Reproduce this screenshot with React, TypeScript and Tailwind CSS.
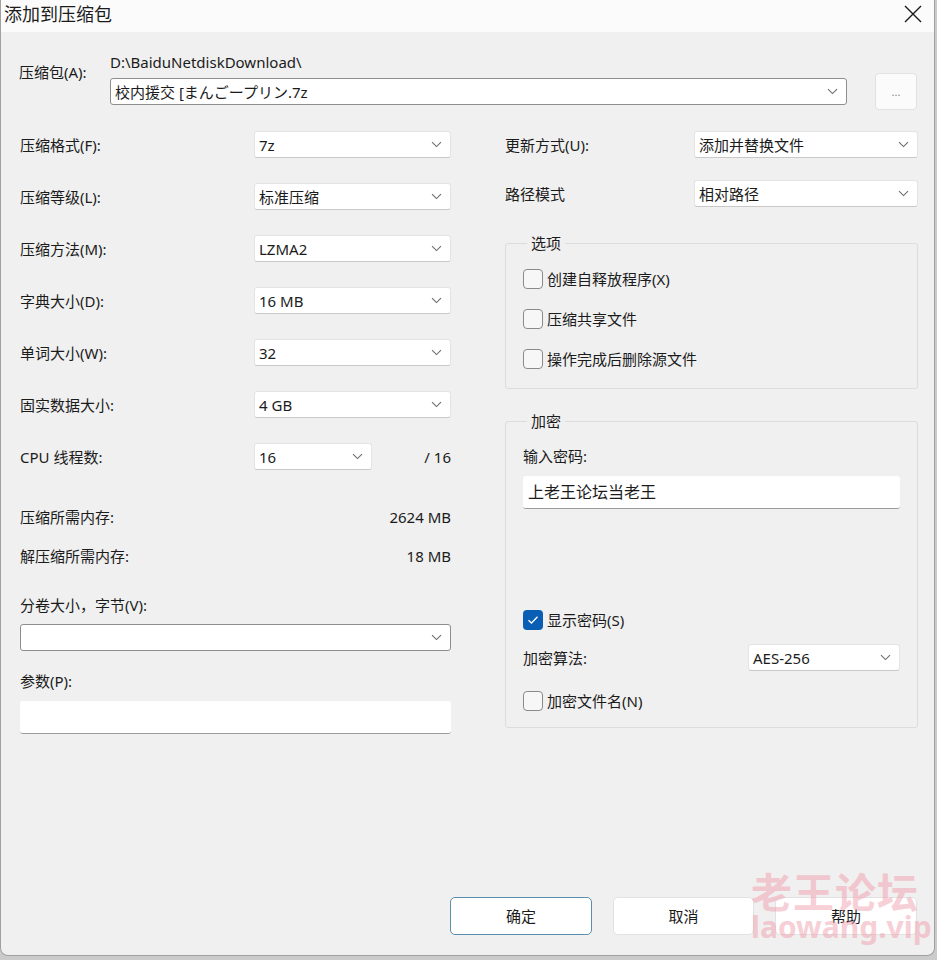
import React from "react";

const F = "font-['Noto_Sans','Noto_Sans_CJK_SC','Noto_Sans_CJK_JP',sans-serif]";

function Chevron() {
  return (
    <svg width="11" height="7" viewBox="0 0 11 7" className="shrink-0">
      <path d="M1 1.2 L5.5 5.6 L10 1.2" fill="none" stroke="#6b6b6b" strokeWidth="1.1" />
    </svg>
  );
}

function Select({ value, w, h = "h-[27px]", strong = false }: { value: string; w: string; h?: string; strong?: boolean }) {
  return (
    <div
      className={`${w} ${h} flex items-center justify-between bg-white rounded-[3px] pl-[4px] pr-[8px] ${
        strong ? "border border-[#8e8e8e]" : "border border-[#e4e4e4] border-b-[#c9c9c9]"
      }`}
    >
      <span className="text-[15px] leading-[20px] text-[#1b1b1b] whitespace-nowrap">{value}</span>
      <Chevron />
    </div>
  );
}

function Check({ label, checked = false }: { label: string; checked?: boolean }) {
  return (
    <div className="flex items-center h-[20px]">
      {checked ? (
        <div className="w-[20px] h-[20px] rounded-[4px] bg-[#0a5fb4] flex items-center justify-center">
          <svg width="12" height="10" viewBox="0 0 12 10">
            <path d="M1.5 5.2 L4.5 8 L10.5 1.8" fill="none" stroke="white" strokeWidth="1.3" />
          </svg>
        </div>
      ) : (
        <div className="w-[20px] h-[20px] rounded-[4px] border border-[#8a8a8a] bg-[#f7f7f7]" />
      )}
      <span className="ml-[4px] text-[15px] leading-[20px] text-[#1b1b1b] whitespace-nowrap">{label}</span>
    </div>
  );
}

function Row({ label, children }: { label: string; children: React.ReactNode }) {
  return (
    <div className="flex items-center justify-between h-[27px]">
      <span className="text-[15px] leading-[20px] text-[#1b1b1b] whitespace-nowrap">{label}</span>
      {children}
    </div>
  );
}

export default function App() {
  return (
    <div className={`w-[937px] h-[960px] bg-[#cbcbcb] ${F} overflow-hidden`}>
      <div className="relative w-[935px] h-[956px] bg-[#f0f0f0] border-l border-r border-b border-[#a0a0a0] rounded-b-[8px] flex flex-col">
        {/* title bar */}
        <div className="h-[32px] bg-[#fbfbfb] flex items-center justify-between pl-[3px] pr-[12px] shrink-0">
          <span className="text-[18px] leading-[24px] text-[#1b1b1b] -mt-[4px]">添加到压缩包</span>
          <svg width="18" height="18" viewBox="0 0 18 18" className="-mt-[4px]">
            <path d="M1 1 L17 17 M17 1 L1 17" stroke="#1b1b1b" strokeWidth="1.4" />
          </svg>
        </div>

        {/* archive row */}
        <div className="flex items-start pl-[18px] pt-[20px]">
          <span className="w-[91px] mt-[10px] text-[15px] leading-[20px] text-[#1b1b1b] whitespace-nowrap">压缩包(A):</span>
          <div className="flex flex-col">
            <span className="text-[15px] leading-[20px] text-[#1b1b1b]">D:\BaiduNetdiskDownload\</span>
            <div className="flex items-center mt-[1px] h-[37px]">
              <Select value="校内援交 [まんごープリン.7z" w="w-[737px]" h="h-[27px]" strong />
              <div className="ml-[28px] w-[42px] h-[37px] bg-[#fbfbfb] border border-[#e2e2e2] rounded-[4px] flex items-center justify-center">
                <span className="text-[11px] text-[#8a8a8a] leading-none">...</span>
              </div>
            </div>
          </div>
        </div>

        {/* main columns */}
        <div className="flex pl-[19px] mt-[21px]">
          {/* left */}
          <div className="w-[431px] flex flex-col">
            <div className="flex flex-col gap-[25px]">
              <Row label="压缩格式(F):"><Select value="7z" w="w-[197px]" /></Row>
              <Row label="压缩等级(L):"><Select value="标准压缩" w="w-[197px]" /></Row>
              <Row label="压缩方法(M):"><Select value="LZMA2" w="w-[197px]" /></Row>
              <Row label="字典大小(D):"><Select value="16 MB" w="w-[197px]" /></Row>
              <Row label="单词大小(W):"><Select value="32" w="w-[197px]" /></Row>
              <Row label="固实数据大小:"><Select value="4 GB" w="w-[197px]" /></Row>
              <div className="flex items-center h-[27px]">
                <span className="w-[234px] text-[15px] leading-[20px] text-[#1b1b1b]">CPU 线程数:</span>
                <Select value="16" w="w-[118px]" />
                <span className="ml-auto text-[15px] leading-[20px] text-[#1b1b1b]">/ 16</span>
              </div>
            </div>
            <div className="flex justify-between mt-[37px] text-[15px] leading-[20px] text-[#1b1b1b]">
              <span>压缩所需内存:</span>
              <span>2624 MB</span>
            </div>
            <div className="flex justify-between mt-[19px] text-[15px] leading-[20px] text-[#1b1b1b]">
              <span>解压缩所需内存:</span>
              <span>18 MB</span>
            </div>
            <span className="mt-[29px] text-[15px] leading-[20px] text-[#1b1b1b]">分卷大小，字节(V):</span>
            <div className="mt-[9px]">
              <Select value="" w="w-[431px]" strong />
            </div>
            <span className="mt-[20px] text-[15px] leading-[20px] text-[#1b1b1b]">参数(P):</span>
            <div className="mt-[10px] w-[431px] h-[33px] bg-white rounded-[3px] border-b border-[#9a9a9a]" />
          </div>

          {/* right */}
          <div className="ml-[54px] w-[413px] flex flex-col">
            <Row label="更新方式(U):"><Select value="添加并替换文件" w="w-[224px]" /></Row>
            <div className="mt-[22px]">
              <Row label="路径模式"><Select value="相对路径" w="w-[224px]" /></Row>
            </div>

            <fieldset className="mt-[26px] border border-[#dcdcdc] rounded-[3px] pl-[17px] pt-[16px] pb-[19px] flex flex-col gap-[20px]">
              <legend className="ml-[4px] px-[4px] text-[15px] leading-[20px] text-[#1b1b1b]">选项</legend>
              <Check label="创建自释放程序(X)" />
              <Check label="压缩共享文件" />
              <Check label="操作完成后删除源文件" />
            </fieldset>

            <fieldset className="mt-[22px] border border-[#dcdcdc] rounded-[3px] pl-[17px] pr-[17px] pb-[16px] flex flex-col">
              <legend className="ml-[4px] px-[4px] text-[15px] leading-[20px] text-[#1b1b1b]">加密</legend>
              <span className="mt-[15px] text-[15px] leading-[20px] text-[#1b1b1b]">输入密码:</span>
              <div className="mt-[10px] h-[33px] bg-white rounded-[3px] border-b border-[#9a9a9a] flex items-center pl-[5px]">
                <span className="text-[16px] leading-[22px] text-[#1b1b1b]">上老王论坛当老王</span>
              </div>
              <div className="mt-[101px]">
                <Check label="显示密码(S)" checked />
              </div>
              <div className="mt-[14px]">
                <Row label="加密算法:"><Select value="AES-256" w="w-[152px]" /></Row>
              </div>
              <div className="mt-[20px]">
                <Check label="加密文件名(N)" />
              </div>
            </fieldset>
          </div>
        </div>

        {/* footer buttons */}
        <div className="mt-auto flex justify-end gap-[21px] pr-[17px] pb-[20px]">
          <div className="w-[142px] h-[38px] bg-white border border-[#5a8fae] rounded-[5px] flex items-center justify-center text-[15px] text-[#1b1b1b]">确定</div>
          <div className="w-[141px] h-[38px] bg-white border border-[#e2e2e2] rounded-[5px] flex items-center justify-center text-[15px] text-[#1b1b1b]">取消</div>
          <div className="w-[142px] h-[38px] bg-white border border-[#e2e2e2] rounded-[5px] flex items-center justify-center text-[15px] text-[#1b1b1b]">帮助</div>
        </div>

        {/* watermark */}
        <div className="absolute left-[750px] top-[868px] flex flex-col items-start pointer-events-none">
          <span className="text-[41px] leading-[48px] font-bold text-[#f0a0ae] opacity-50 tracking-[1px]">老王论坛</span>
          <span className="-mt-[6px] text-[30px] leading-[34px] font-bold text-[#f0a0ae] opacity-50">laowang.vip</span>
        </div>
      </div>
    </div>
  );
}
